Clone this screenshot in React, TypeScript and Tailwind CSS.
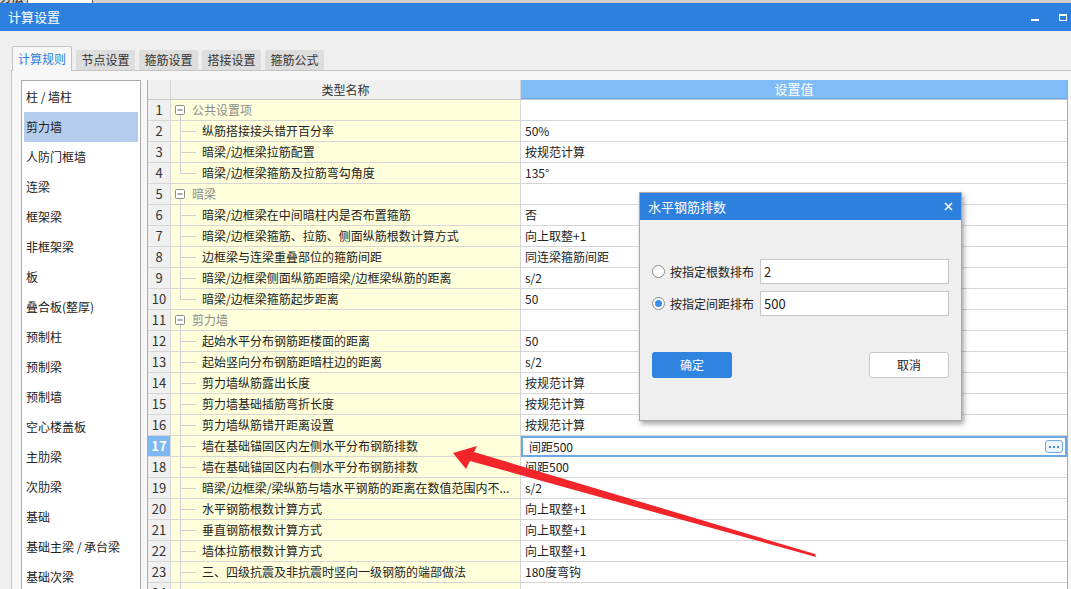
import React from 'react';

type Row = { n: number; group?: boolean; text: string; value?: string; last?: boolean };

const rows: Row[] = [
  { n: 1, group: true, text: '公共设置项' },
  { n: 2, text: '纵筋搭接接头错开百分率', value: '50%' },
  { n: 3, text: '暗梁/边框梁拉筋配置', value: '按规范计算' },
  { n: 4, text: '暗梁/边框梁箍筋及拉筋弯勾角度', value: '135°', last: true },
  { n: 5, group: true, text: '暗梁' },
  { n: 6, text: '暗梁/边框梁在中间暗柱内是否布置箍筋', value: '否' },
  { n: 7, text: '暗梁/边框梁箍筋、拉筋、侧面纵筋根数计算方式', value: '向上取整+1' },
  { n: 8, text: '边框梁与连梁重叠部位的箍筋间距', value: '同连梁箍筋间距' },
  { n: 9, text: '暗梁/边框梁侧面纵筋距暗梁/边框梁纵筋的距离', value: 's/2' },
  { n: 10, text: '暗梁/边框梁箍筋起步距离', value: '50', last: true },
  { n: 11, group: true, text: '剪力墙' },
  { n: 12, text: '起始水平分布钢筋距楼面的距离', value: '50' },
  { n: 13, text: '起始竖向分布钢筋距暗柱边的距离', value: 's/2' },
  { n: 14, text: '剪力墙纵筋露出长度', value: '按规范计算' },
  { n: 15, text: '剪力墙基础插筋弯折长度', value: '按规范计算' },
  { n: 16, text: '剪力墙纵筋错开距离设置', value: '按规范计算' },
  { n: 17, text: '墙在基础锚固区内左侧水平分布钢筋排数', value: '间距500' },
  { n: 18, text: '墙在基础锚固区内右侧水平分布钢筋排数', value: '间距500' },
  { n: 19, text: '暗梁/边框梁/梁纵筋与墙水平钢筋的距离在数值范围内不...', value: 's/2' },
  { n: 20, text: '水平钢筋根数计算方式', value: '向上取整+1' },
  { n: 21, text: '垂直钢筋根数计算方式', value: '向上取整+1' },
  { n: 22, text: '墙体拉筋根数计算方式', value: '向上取整+1' },
  { n: 23, text: '三、四级抗震及非抗震时竖向一级钢筋的端部做法', value: '180度弯钩' },
  { n: 24, text: '', value: '' },
];

const sideItems = [
  '柱 / 墙柱', '剪力墙', '人防门框墙', '连梁', '框架梁', '非框架梁', '板', '叠合板(整厚)',
  '预制柱', '预制梁', '预制墙', '空心楼盖板', '主肋梁', '次肋梁', '基础', '基础主梁 / 承台梁', '基础次梁',
];

const tabs = ['计算规则', '节点设置', '箍筋设置', '搭接设置', '箍筋公式'];

function GroupNode() {
  return (
    <svg width="21" height="20" className="shrink-0">
      <rect x="4.5" y="5.5" width="9" height="9" fill="#fff" stroke="#8a8a8a" rx="1" />
      <line x1="6.5" y1="10" x2="11.5" y2="10" stroke="#555" />
      <line x1="9.5" y1="15" x2="9.5" y2="20" stroke="#cfcfcf" />
    </svg>
  );
}

function ChildNode({ last }: { last?: boolean }) {
  return (
    <svg width="31" height="20" className="shrink-0">
      <line x1="9.5" y1="0" x2="9.5" y2={last ? 10.5 : 20} stroke="#cfcfcf" />
      <line x1="9.5" y1="10.5" x2="25" y2="10.5" stroke="#cfcfcf" />
    </svg>
  );
}

export default function App() {
  const font = { fontFamily: '"Noto Sans CJK SC", "Noto Sans", sans-serif' };
  return (
    <div className="relative w-[1071px] h-[589px] overflow-hidden bg-[#efefef] text-[12px] text-[#222]" style={font}>
      {/* strip of the window behind */}
      <div className="h-[3px] bg-[#cfcfcf] flex overflow-hidden">
        <span className="w-[27px] text-[12px] leading-[12px] -mt-[9px] text-[#222]">分层</span>
        <div className="w-[66px] bg-white border-x border-[#555]" />
      </div>

      {/* title bar */}
      <div className="h-[28px] bg-[#2e80de] flex items-center justify-between pl-[8px] pr-[4px] text-white">
        <span className="text-[13px] leading-[20px]">计算设置</span>
        <div className="flex items-center gap-[20px]">
          <div className="w-[8px] h-[2px] bg-white mt-[6px]" />
          <div className="w-[8px] h-[7px] border border-white border-t-2" />
        </div>
      </div>

      {/* tabs */}
      <div className="pt-[15px] pl-[12px] flex items-end gap-[4px]">
        {tabs.map((t, i) =>
          i === 0 ? (
            <div key={t} className="w-[60px] h-[25px] bg-[#f7f7f7] border border-b-0 border-[#c4c4c4] rounded-t-[2px] flex items-center justify-center text-[#2e80de] text-[12px] -mb-px relative z-10">
              {t}
            </div>
          ) : (
            <div key={t} className="w-[59px] h-[20px] bg-[#dddddd] rounded-t-[2px] flex items-center justify-center text-[#333] text-[12px]">
              {t}
            </div>
          ),
        )}
      </div>

      {/* panel */}
      <div className="ml-[11px] border-l border-t border-[#c4c4c4] bg-[#f7f7f7] pt-[9px] pl-[9px] flex gap-[6px] h-[600px]">
        {/* sidebar */}
        <div className="w-[120px] border border-[#aaaaaa] bg-white p-px self-start">
          {sideItems.map((s, i) => (
            <div key={s} className={`h-[30px] flex items-center pl-[2px] mx-px text-[12px] ${i === 1 ? 'bg-[#b4cded]' : ''}`}>
              {s}
            </div>
          ))}
        </div>

        {/* grid */}
        <div className="w-[921px] border-l border-r border-[#aaaaaa] bg-white self-start">
          <div className="flex h-[20px] border-b border-[#c8c8c8]">
            <div className="w-[23px] shrink-0 bg-[#f0f0f0] border-r border-[#d4d4d4]" />
            <div className="w-[350px] shrink-0 bg-[#f0f0f0] border-r border-[#d4d4d4] flex items-center justify-center text-[#333]">类型名称</div>
            <div className="flex-1 bg-[#80bcf8] border-b border-[#6aa6e6] flex items-center justify-center text-white text-[13px]">设置值</div>
          </div>
          {rows.map((r) => {
            const sel = r.n === 17;
            return (
              <div key={r.n} className="flex h-[21px] leading-[20px]">
                <div className={`w-[23px] shrink-0 border-r border-b border-[#d6d6d6] flex items-center justify-center text-[13px] ${sel ? 'bg-[#7db8f2] text-white font-bold' : 'bg-[#f0f0f0] text-[#333]'}`}>
                  {r.n}
                </div>
                <div className="w-[350px] shrink-0 bg-[#ffffdc] border-r border-b border-[#d6d6d6] flex items-start overflow-hidden whitespace-nowrap">
                  {r.group ? (
                    <>
                      <GroupNode />
                      <span className="text-[#8c8c8c]">{r.text}</span>
                    </>
                  ) : (
                    <>
                      <ChildNode last={r.last} />
                      <span>{r.text}</span>
                    </>
                  )}
                </div>
                {sel ? (
                  <div className="flex-1 border-2 border-[#6ea8e4] flex items-center justify-between pl-[6px] pr-[2px]">
                    <span>{r.value}</span>
                    <div className="w-[18px] h-[13px] rounded-[3px] border border-[#6ea8e4] bg-[#eef4fb] flex items-center justify-center gap-[2px]">
                      <span className="w-[2px] h-[2px] bg-[#4a8ad4]" />
                      <span className="w-[2px] h-[2px] bg-[#4a8ad4]" />
                      <span className="w-[2px] h-[2px] bg-[#4a8ad4]" />
                    </div>
                  </div>
                ) : (
                  <div className="flex-1 border-b border-[#d6d6d6] pl-[4px] whitespace-nowrap">{r.value}</div>
                )}
              </div>
            );
          })}
        </div>
      </div>

      {/* dialog */}
      <div className="absolute left-[639px] top-[192px] w-[323px] h-[229px] bg-[#efefef] border border-[#a8a8a8] shadow-[2px_3px_5px_rgba(0,0,0,0.35)] flex flex-col">
        <div className="h-[27px] bg-[#2e80de] flex items-center justify-between pl-[8px] pr-[8px] text-white">
          <span className="text-[13px]">水平钢筋排数</span>
          <svg width="9" height="9" viewBox="0 0 9 9">
            <path d="M1 1 L8 8 M8 1 L1 8" stroke="#fff" strokeWidth="1.6" />
          </svg>
        </div>
        <div className="flex-1 flex flex-col pt-[39px] px-[12px]">
          <div className="flex items-center h-[25px]">
            <span className="w-[13px] h-[13px] rounded-full border border-[#8a8a8a] bg-white shrink-0" />
            <span className="ml-[5px] w-[90px] text-[12px]">按指定根数排布</span>
            <div className="flex-1 h-[25px] bg-white border border-[#c6c6c6] pl-[3px] flex items-center text-[13px]">2</div>
          </div>
          <div className="flex items-center h-[25px] mt-[7px]">
            <span className="w-[13px] h-[13px] rounded-full border border-[#8a8a8a] bg-white shrink-0 flex items-center justify-center">
              <span className="w-[7px] h-[7px] rounded-full bg-[#3b8ee6]" />
            </span>
            <span className="ml-[5px] w-[90px] text-[12px]">按指定间距排布</span>
            <div className="flex-1 h-[25px] bg-white border border-[#c6c6c6] pl-[3px] flex items-center text-[13px]">500</div>
          </div>
          <div className="flex justify-between mt-[36px]">
            <div className="w-[80px] h-[26px] bg-[#2f84e0] rounded-[3px] flex items-center justify-center text-white text-[12px]">确定</div>
            <div className="w-[80px] h-[26px] bg-white border border-[#c8c8c8] rounded-[3px] flex items-center justify-center text-[#222] text-[12px]">取消</div>
          </div>
        </div>
      </div>

      {/* red annotation arrow */}
      <svg className="absolute inset-0 pointer-events-none" width="1071" height="589">
        <polygon points="453,453 477,446 474,452 815,554 816,557 470,461 466,469" fill="#f2262a" />
      </svg>
    </div>
  );
}
